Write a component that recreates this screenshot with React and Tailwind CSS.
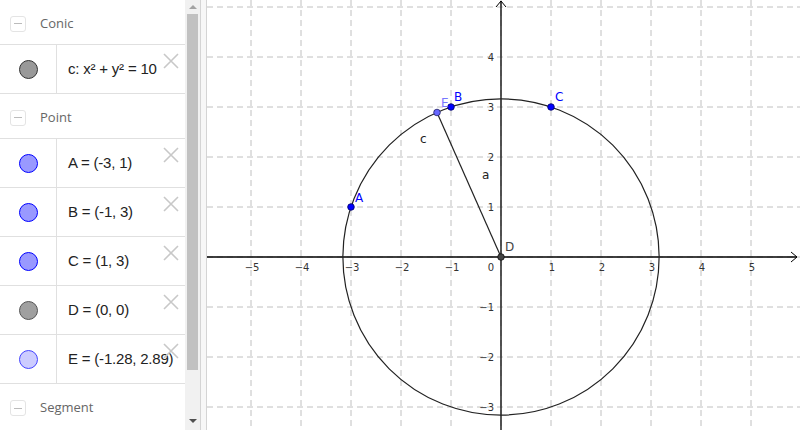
import React from "react";

const items = [
  { type: "header", label: "Conic" },
  { type: "row", text: "c: x² + y² = 10", fill: "bg-[#999999]", ring: "border-[#333333]" },
  { type: "header", label: "Point" },
  { type: "row", text: "A = (-3, 1)", fill: "bg-[#9999ff]", ring: "border-[#0000ff]" },
  { type: "row", text: "B = (-1, 3)", fill: "bg-[#9999ff]", ring: "border-[#0000ff]" },
  { type: "row", text: "C = (1, 3)", fill: "bg-[#9999ff]", ring: "border-[#0000ff]" },
  { type: "row", text: "D = (0, 0)", fill: "bg-[#a0a0a0]", ring: "border-[#555555]" },
  { type: "row", text: "E = (-1.28, 2.89)", fill: "bg-[#ccccff]", ring: "border-[#4444ff]" },
  { type: "header", label: "Segment" },
];

function Cross() {
  return (
    <svg width="16" height="16" viewBox="0 0 16 16" className="absolute right-[6px] top-[8px]">
      <path d="M1 1 L15 15 M15 1 L1 15" stroke="#c8c8c8" strokeWidth="1.6" fill="none" />
    </svg>
  );
}

function AlgebraPanel() {
  return (
    <div className="w-[185px] flex flex-col bg-white" style={{ fontFamily: "'Liberation Sans', Arial, sans-serif" }}>
      {items.map((it, i) =>
        it.type === "header" ? (
          <div key={i} className="h-[45px] shrink-0 flex items-center pt-[3px] border-b border-[#e0e0e0] last:border-b-0">
            <div className="ml-[10px] w-[16px] h-[16px] border border-[#e4e4e4] rounded-[3px] flex items-center justify-center">
              <div className="w-[8px] h-[1px] bg-[#bbbbbb]" />
            </div>
            <span className="ml-[14px] text-[13px] text-[#666666]" style={{ fontFamily: "'Open Sans', sans-serif" }}>
              {it.label}
            </span>
          </div>
        ) : (
          <div key={i} className="relative h-[49px] shrink-0 flex border-b border-[#e0e0e0]">
            <div className="w-[57px] border-r border-[#e0e0e0] flex items-center justify-center">
              <div className={`w-[19px] h-[19px] rounded-full border ${it.fill} ${it.ring}`} />
            </div>
            <div className="pl-[11px] flex items-center text-[15px] tracking-[-0.2px] text-[#222222] whitespace-nowrap">{it.text}</div>
            <Cross />
          </div>
        )
      )}
    </div>
  );
}

function Scrollbar() {
  return (
    <div className="w-[15px] bg-[#f1f1f1] flex flex-col items-center">
      <div className="h-[14px] flex items-center justify-center">
        <div className="w-0 h-0 border-x-[4px] border-x-transparent border-b-[4px] border-b-[#a3a3a3]" />
      </div>
      <div className="w-[11px] h-[356px] bg-[#c1c1c1]" />
      <div className="flex-1 flex items-end justify-center pb-[7px]">
        <div className="w-0 h-0 border-x-[4px] border-x-transparent border-t-[4px] border-t-[#505050]" />
      </div>
    </div>
  );
}

function Graphics() {
  const ox = 501;
  const oy = 257;
  const u = 50;
  const xs = [-5, -4, -3, -2, -1, 1, 2, 3, 4, 5];
  const ys = [-3, -2, -1, 1, 2, 3, 4];
  const vgrid = [-5, -4, -3, -2, -1, 0, 1, 2, 3, 4, 5];
  const hgrid = [-3, -2, -1, 0, 1, 2, 3, 4, 5];
  const r = Math.sqrt(10) * u;
  const P = (x, y) => [ox + x * u, oy - y * u];
  const [ax, ay] = P(-3, 1);
  const [bx, by] = P(-1, 3);
  const [cx, cy] = P(1, 3);
  const [ex, ey] = P(-1.28, 2.89);
  const lbl = { fontFamily: "'DejaVu Sans', sans-serif" };
  return (
    <div className="flex-1 bg-white">
      <svg width="593" height="430" viewBox="207 0 593 430" style={lbl}>
        {vgrid.map((k) => (
          <line key={"v" + k} x1={ox + k * u} y1="0" x2={ox + k * u} y2="430" stroke="#c0c0c0" strokeDasharray="6 4" />
        ))}
        {hgrid.map((k) => (
          <line key={"h" + k} x1="207" y1={oy - k * u} x2="800" y2={oy - k * u} stroke="#c0c0c0" strokeDasharray="6 4" />
        ))}
        <line x1="207" y1={oy} x2="797" y2={oy} stroke="#000" strokeWidth="1.3" />
        <path d="M791 252 L797 257 L791 262" stroke="#000" fill="none" />
        <line x1={ox} y1="1" x2={ox} y2="430" stroke="#000" strokeWidth="1.3" />
        <path d="M496 7 L501 1 L506 7" stroke="#000" fill="none" />
        {xs.map((k) => (
          <text key={"xl" + k} x={ox + k * u + 1} y="271" fontSize="10" textAnchor="middle" fill="#333">
            {k < 0 ? "\u2212" + -k : k}
          </text>
        ))}
        <text x="491" y="271" fontSize="10" textAnchor="middle" fill="#333">0</text>
        {ys.map((k) => (
          <text key={"yl" + k} x="494" y={oy - k * u + 4} fontSize="10" textAnchor="end" fill="#333">
            {k < 0 ? "\u2212" + -k : k}
          </text>
        ))}
        <circle cx={ox} cy={oy} r={r} fill="none" stroke="#222" strokeWidth="1.2" />
        <line x1={ox} y1={oy} x2={ex} y2={ey} stroke="#222" strokeWidth="1.2" />
        <text x="420" y="143" fontSize="12" fill="#222">c</text>
        <text x="482" y="179" fontSize="12" fill="#222">a</text>
        <circle cx={ax} cy={ay} r="3.3" fill="#0000ff" stroke="#000066" strokeWidth="0.8" />
        <circle cx={bx} cy={by} r="3.3" fill="#0000ff" stroke="#000066" strokeWidth="0.8" />
        <circle cx={cx} cy={cy} r="3.3" fill="#0000ff" stroke="#000066" strokeWidth="0.8" />
        <circle cx={ex} cy={ey} r="3.3" fill="#6666ff" stroke="#222266" strokeWidth="0.8" />
        <circle cx={ox} cy={oy} r="3.3" fill="#444" stroke="#111" strokeWidth="0.8" />
        <text x="355" y="202" fontSize="12" fill="#0000ff">A</text>
        <text x="454" y="101" fontSize="12" fill="#0000ff">B</text>
        <text x="555" y="101" fontSize="12" fill="#0000ff">C</text>
        <text x="441" y="107" fontSize="12" fill="#7777ff">E</text>
        <text x="505" y="251" fontSize="12" fill="#444">D</text>
      </svg>
    </div>
  );
}

export default function App() {
  return (
    <div className="w-[800px] h-[430px] flex overflow-hidden bg-white">
      <AlgebraPanel />
      <Scrollbar />
      <div className="w-[7px] border-x border-[#d4d4d4] bg-[#f7f7f7]" />
      <Graphics />
    </div>
  );
}
